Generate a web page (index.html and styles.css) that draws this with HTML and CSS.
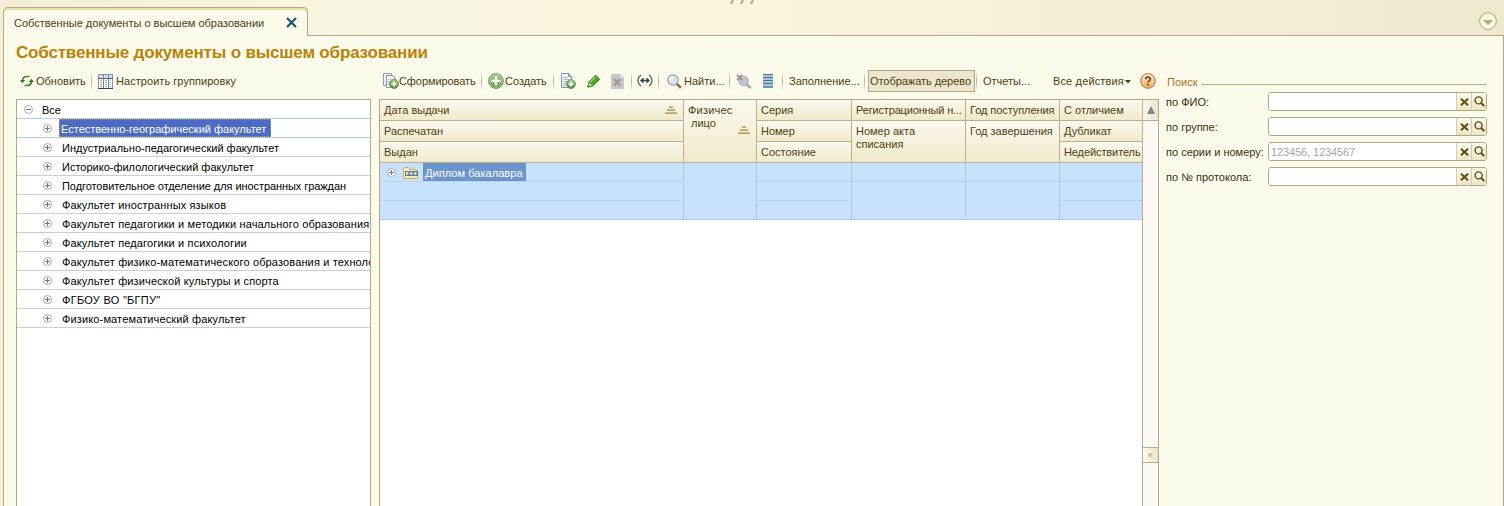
FILE: index.html
```html
<!DOCTYPE html>
<html lang="ru">
<head>
  <meta charset="utf-8">
  <title>Собственные документы о высшем образовании</title>
  <link rel="stylesheet" href="styles.css">
</head>
<body>
  <svg class="defs" width="0" height="0">
    <defs>
      <linearGradient id="green" x1="0" y1="0" x2="0" y2="1">
        <stop offset="0" stop-color="#a5cf8d"/>
        <stop offset="1" stop-color="#4f8f3d"/>
      </linearGradient>
      <linearGradient id="orange" x1="0" y1="0" x2="0" y2="1">
        <stop offset="0" stop-color="#fdebd0"/>
        <stop offset="1" stop-color="#f5a94b"/>
      </linearGradient>
      <symbol id="plus" viewBox="0 0 9 9">
        <circle cx="4.5" cy="4.5" r="4" fill="#fff" stroke="#a9a9a9"/>
        <path d="M2 4.5h5M4.5 2v5" stroke="#777"/>
      </symbol>
      <symbol id="minus" viewBox="0 0 9 9">
        <circle cx="4.5" cy="4.5" r="4" fill="#fff" stroke="#a9a9a9"/>
        <path d="M2 4.5h5" stroke="#777"/>
      </symbol>
      <symbol id="sort" viewBox="0 0 12 8">
        <path d="M4 1h4M2 4h8M0 7h12" stroke="#b3a562" stroke-width="2"/>
        <path d="M4 .5h4M2 3.5h8M0 6.5h12" stroke="#c8bc86"/>
      </symbol>
      <symbol id="add-badge" viewBox="0 0 10 10">
        <circle cx="5" cy="5" r="4.5" fill="url(#green)" stroke="#5c8f4c" stroke-width=".8"/>
        <path d="M2.4 5h5.2M5 2.4v5.2" stroke="#fff" stroke-width="1.7"/>
      </symbol>
      <symbol id="cross" viewBox="0 0 9 8">
        <path d="M1 .8l7 6.4M8 .8L1 7.2" stroke="#5e4c0b" stroke-width="1.9"/>
      </symbol>
      <symbol id="loupe" viewBox="0 0 11 11">
        <circle cx="4.6" cy="4.4" r="3.5" fill="none" stroke="#5e4c0b" stroke-width="1.4"/>
        <path d="M6.9 6.7l3.4 3.4" stroke="#5e4c0b" stroke-width="2"/>
      </symbol>
    </defs>
  </svg>

  <div class="tabbar">
    <div class="tab">
      <span class="tab-title">Собственные документы о высшем образовании</span>
      <svg width="11" height="11" viewBox="0 0 11 11"><path d="M1 1l9 9M10 1l-9 9" stroke="#1f5478" stroke-width="2.2"/></svg>
    </div>
    <div class="tabbar-rest">
      <svg class="grip" width="25" height="4" viewBox="0 0 25 4"><path d="M1 4l2-4M11 4l2-4M21 4l2-4" stroke="#b3ad8c" stroke-width="2.2"/></svg>
      <svg class="tab-menu" width="18" height="18" viewBox="0 0 18 18">
        <circle cx="9" cy="9" r="8.4" fill="#fbf8e2" stroke="#b0a66f"/>
        <path d="M4 8h10l-5 5z" fill="#b5aa67"/>
      </svg>
    </div>
  </div>

  <div class="window">
    <h1>Собственные документы о высшем образовании</h1>

    <div class="columns">
      <div class="groups">
        <div class="toolbar toolbar-left">
          <button class="tool">
            <svg width="14" height="12" viewBox="0 0 14 12">
              <path d="M2.5 5C3 2.5 5 1.500 7 1.500h2.500M11.500 7c-.5 2.500-2.500 3.500-4.500 3.500H4.500" fill="none" stroke="#43832c" stroke-width="1.7"/>
              <path d="M0 5h5.200L2.600 8.200zM8.800 7H14l-2.600-3.200z" fill="#2f7a1c"/>
            </svg>
            <span>Обновить</span>
          </button>
          <i class="sep"></i>
          <button class="tool setup">
            <svg width="15" height="15" viewBox="0 0 15 15">
              <path d="M.5.5h14v14H.5z" fill="#fff" stroke="#8496aa"/>
              <path d="M1 1h13v3H1z" fill="#d3dfec"/>
              <path d="M0 4.500h15" stroke="#48617f"/>
              <path d="M5.500 0v15M10.500 0v15" stroke="#7288a2"/>
              <path d="M2 6.500h2M7 6.500h2M12 6.500h1M2 8.500h2M7 8.500h2M12 8.500h1M2 10.500h2M7 10.500h2M12 10.500h1M2 12.500h2M7 12.500h2M12 12.500h1" stroke="#a3b0bc"/>
              <path d="M0 14.500h15" stroke="#24466d"/>
            </svg>
            <span>Настроить группировку</span>
          </button>
        </div>

        <ul class="tree">
          <li class="root"><svg width="9" height="9"><use href="#minus"/></svg><span>Все</span></li>
          <li class="selected"><svg width="9" height="9"><use href="#plus"/></svg><span>Естественно-географический факультет</span></li>
          <li><svg width="9" height="9"><use href="#plus"/></svg><span>Индустриально-педагогический факультет</span></li>
          <li><svg width="9" height="9"><use href="#plus"/></svg><span>Историко-филологический факультет</span></li>
          <li><svg width="9" height="9"><use href="#plus"/></svg><span class="narrow">Подготовительное отделение для иностранных граждан</span></li>
          <li class="wide"><svg width="9" height="9"><use href="#plus"/></svg><span>Факультет иностранных языков</span></li>
          <li class="wide"><svg width="9" height="9"><use href="#plus"/></svg><span>Факультет педагогики и методики начального образования</span></li>
          <li class="wide"><svg width="9" height="9"><use href="#plus"/></svg><span>Факультет педагогики и психологии</span></li>
          <li class="wide"><svg width="9" height="9"><use href="#plus"/></svg><span>Факультет физико-математического образования и техноло</span></li>
          <li class="wide"><svg width="9" height="9"><use href="#plus"/></svg><span>Факультет физической культуры и спорта</span></li>
          <li class="caps"><svg width="9" height="9"><use href="#plus"/></svg><span>ФГБОУ ВО "БГПУ"</span></li>
          <li class="wide"><svg width="9" height="9"><use href="#plus"/></svg><span>Физико-математический факультет</span></li>
        </ul>
      </div>

      <div class="documents">
        <div class="toolbar toolbar-main">
          <button class="tool">
            <svg width="16" height="16" viewBox="0 0 16 16">
              <path d="M.5.500h8v12h-8z" fill="#eef2f5" stroke="#8fa0ac"/>
              <path d="M3.500 2.500h6l3 3v9h-9z" fill="#f4f7fa" stroke="#8297a8"/>
              <path d="M5 6.500h5M5 8.500h4M5 10.500h2" stroke="#b7c6d2"/>
              <use href="#add-badge" x="6" y="6" width="10" height="10"/>
            </svg>
            <span class="narrow">Сформировать</span>
          </button>
          <i class="sep"></i>
          <button class="tool">
            <svg width="16" height="16" viewBox="0 0 16 16">
              <circle cx="8" cy="8" r="7.400" fill="url(#green)" stroke="#65945a"/>
              <circle cx="8" cy="8" r="6.300" fill="none" stroke="#c0dcb0" stroke-width=".8"/>
              <path d="M3.500 8h9M8 3.500v9" stroke="#fff" stroke-width="2.600"/>
            </svg>
            <span class="create">Создать</span>
          </button>
          <i class="sep"></i>
          <button class="tool">
            <svg width="16" height="16" viewBox="0 0 16 16">
              <path d="M1.500.500h7l3 3v11h-10z" fill="#f4f7fa" stroke="#8297a8"/>
              <path d="M8.500.500v3h3" fill="none" stroke="#8297a8"/>
              <path d="M3 4.500h5M3 6.500h6M3 8.500h4M3 10.500h3M3 12.500h3" stroke="#a9bfd0"/>
              <use href="#add-badge" x="6" y="6" width="10" height="10"/>
            </svg>
          </button>
          <button class="tool pencil">
            <svg width="13" height="13" viewBox="0 0 13 13">
              <path d="M1 12l.8-5L8 .800h1l3.200 3v1L5.500 11z" fill="#49a827" stroke="#267b10"/>
              <path d="M3 7.500l5.500-5.500" stroke="#8fd566" stroke-width="1.500"/>
              <path d="M1.900 7.800l3 2.800L1.200 12z" fill="#e5e3b5"/>
              <path d="M.5 12.600l.5-2.400 1.800 1.600z" fill="#184f0b"/>
            </svg>
          </button>
          <button class="tool">
            <svg width="14" height="15" viewBox="0 0 14 15">
              <path d="M1 0h9l4 4v11H1z" fill="#c6c6ca"/>
              <path d="M10 0v4h4" fill="#dadadd"/>
              <path d="M4 5l6.500 6.500M10.500 5L4 11.500" stroke="#a89494" stroke-width="2.400"/>
            </svg>
          </button>
          <i class="sep"></i>
          <button class="tool">
            <svg width="16" height="14" viewBox="0 0 16 14">
              <path d="M4 1C0 4 0 9 4 12M12 1c4 3 4 8 0 11" fill="none" stroke="#6a6658" stroke-width="1.300"/>
              <path d="M4 6.500h8" stroke="#244867" stroke-width="1.500"/>
              <path d="M3 6.500l3.500-3v6zM13 6.500l-3.500-3v6z" fill="#244867"/>
            </svg>
          </button>
          <i class="sep"></i>
          <button class="tool find">
            <svg width="15" height="15" viewBox="0 0 15 15">
              <path d="M9.500 9.500l4.300 4.300" stroke="#9b6b4c" stroke-width="2.600"/>
              <circle cx="6" cy="6" r="5.200" fill="#d5e6f8" stroke="#9c9da6" stroke-width="1.200"/>
              <path d="M3 6a3 3 0 0 1 3-3" fill="none" stroke="#fff" stroke-width="1.400"/>
            </svg>
            <span>Найти...</span>
          </button>
          <i class="sep"></i>
          <button class="tool">
            <svg width="16" height="15" viewBox="0 0 16 15">
              <path d="M10.500 10l4 4" stroke="#b5a9a6" stroke-width="2.800"/>
              <circle cx="7.500" cy="7" r="4.800" fill="#c1c4cc" stroke="#acadb4"/>
              <path d="M1 1l5 5M6 1L1 6" stroke="#a09090" stroke-width="1.800"/>
            </svg>
          </button>
          <button class="tool">
            <svg width="12" height="15" viewBox="0 0 12 15">
              <path d="M1 0h10v14H1z" fill="#8fb4d3"/>
              <path d="M1 .5h10M1 3.500h10M1 6.500h10M1 9.500h10M1 13h10" stroke="#54799b"/>
              <path d="M1 2h10M1 5h10M1 8h10M1 11h10" stroke="#bcd3e5"/>
            </svg>
          </button>
          <i class="sep"></i>
          <button class="tool">Заполнение...</button>
          <i class="sep"></i>
          <button class="tool pressed">Отображать дерево</button>
          <i class="sep"></i>
          <button class="tool">Отчеты...</button>
          <button class="tool">
            <span class="wide">Все действия</span>
            <svg class="caret" width="6" height="4" viewBox="0 0 6 4"><path d="M0 0h6L3 3.500z" fill="#4b3e12"/></svg>
          </button>
          <button class="tool">
            <svg width="16" height="16" viewBox="0 0 16 16">
              <circle cx="8" cy="8" r="7.300" fill="url(#orange)" stroke="#a8957e" stroke-width="1.300"/>
              <path d="M5.700 6.200C5.700 3.300 10.400 3.400 10.400 6c0 1.700-2.300 1.700-2.300 3.500M8.100 10.800v1.700" fill="none" stroke="#6e3e1b" stroke-width="1.600"/>
            </svg>
          </button>
        </div>

        <div class="table">
          <div class="grid">
            <div class="head c1">Дата выдачи<svg width="12" height="8"><use href="#sort"/></svg></div>
            <div class="head c1 r2">Распечатан</div>
            <div class="head c1 r3">Выдан</div>
            <div class="head c2 tall"><div class="person">Физичес<span>лицо</span></div><svg width="12" height="8"><use href="#sort"/></svg></div>
            <div class="head c3">Серия</div>
            <div class="head c3 r2">Номер</div>
            <div class="head c3 r3">Состояние</div>
            <div class="head c4 regnum">Регистрационный н...</div>
            <div class="head c4 double">Номер акта<br>списания</div>
            <div class="head c5 narrow">Год поступления</div>
            <div class="head c5 double">Год завершения</div>
            <div class="head c6">С отличием</div>
            <div class="head c6 r2">Дубликат</div>
            <div class="head c6 r3 void">Недействитель</div>
          </div>
          <div class="grid record">
            <div class="cell c1 name">
              <svg width="9" height="9"><use href="#plus"/></svg>
              <svg class="folder" width="15" height="12" viewBox="0 0 15 12">
                <path d="M.5 11.500V1.500l1-1h4l1.500 2h6.500l1 1v8z" fill="#f8ebb8" stroke="#c9ab5c"/>
                <path d="M2 4h13v5H2z" fill="#66758a"/>
                <path d="M3 5h2.500v1H4v.5h1.500v.5H4v.5h1.500v.5H3zM7 5.500h2.500v2H7zM11 5.500h2.500v2H11z" fill="#fff"/>
              </svg>
              <span>Диплом бакалавра</span>
            </div>
            <div class="cell c1 r2"></div>
            <div class="cell c1 r3"></div>
            <div class="cell c2 tall"></div>
            <div class="cell c3"></div>
            <div class="cell c3 r2"></div>
            <div class="cell c3 r3"></div>
            <div class="cell c4"></div>
            <div class="cell c4 double"></div>
            <div class="cell c5"></div>
            <div class="cell c5 double"></div>
            <div class="cell c6"></div>
            <div class="cell c6 r2"></div>
            <div class="cell c6 r3"></div>
          </div>
          <div class="scrollbar">
            <div class="scroll-up"><svg width="8" height="8" viewBox="0 0 8 8"><path d="M4 0l4 8H0z" fill="#85847f"/></svg></div>
            <div class="scroll-track"></div>
            <div class="scroll-thumb"><i></i></div>
          </div>
        </div>
      </div>

      <form class="search">
        <div class="legend">Поиск</div>
        <div class="field">
          <label>по ФИО:</label>
          <div class="box"><input type="text"><b><svg width="9" height="8"><use href="#cross"/></svg></b><b><svg width="11" height="11"><use href="#loupe"/></svg></b></div>
        </div>
        <div class="field">
          <label>по группе:</label>
          <div class="box"><input type="text"><b><svg width="9" height="8"><use href="#cross"/></svg></b><b><svg width="11" height="11"><use href="#loupe"/></svg></b></div>
        </div>
        <div class="field">
          <label>по серии и номеру:</label>
          <div class="box"><input type="text" placeholder="123456, 1234567"><b><svg width="9" height="8"><use href="#cross"/></svg></b><b><svg width="11" height="11"><use href="#loupe"/></svg></b></div>
        </div>
        <div class="field">
          <label>по № протокола:</label>
          <div class="box"><input type="text"><b><svg width="9" height="8"><use href="#cross"/></svg></b><b><svg width="11" height="11"><use href="#loupe"/></svg></b></div>
        </div>
      </form>
    </div>
  </div>
</body>
</html>
```

FILE: styles.css
```css
* {
  box-sizing: border-box;
}

body {
  margin: 0;
  height: 506px;
  overflow: hidden;
  display: flex;
  flex-direction: column;
  font-family: "Liberation Sans", Arial, sans-serif;
  font-size: 11px;
  color: #4d3f10;
  background: linear-gradient(90deg, #f4eed9 0, #f8f5e0 300px, #f8f4de 750px, #f1ead3 1400px, #efe7d0 100%);
}

.defs {
  position: absolute;
}

svg {
  display: block;
  flex: none;
}

.wide {
  letter-spacing: 0.14px;
}

.narrow {
  letter-spacing: -0.07px;
}

/* tabs */
.tabbar {
  display: flex;
  height: 36px;
  padding-left: 3px;
}

.tab {
  display: flex;
  justify-content: space-between;
  align-items: center;
  width: 305px;
  margin-top: 7px;
  padding: 0 10px 0 10px;
  border: 1px solid #b0a882;
  border-bottom: none;
  border-radius: 5px 5px 0 0;
  background: #fcfaeb;
  box-shadow: inset 0 2px #f5dea4;
  white-space: nowrap;
}

.tab-title {
  padding-top: 1px;
}

.tabbar-rest {
  flex: 1;
  display: flex;
  justify-content: space-between;
  border-bottom: 1px solid #b0a882;
}

.grip {
  margin-left: 422px;
}

.tab-menu {
  margin: 12px 7px 0 0;
}

/* window */
.window {
  flex: 1;
  min-height: 0;
  display: flex;
  flex-direction: column;
  margin-left: 3px;
  padding-left: 12px;
  border-left: 1px solid #b0a882;
  border-right: 1px solid #b0a882;
  background: #fcfaeb;
}

h1 {
  margin: 0;
  height: 34px;
  line-height: 33px;
  font-size: 17px;
  letter-spacing: -0.17px;
  color: #b98306;
  white-space: nowrap;
}

.columns {
  flex: 1;
  min-height: 0;
  display: grid;
  grid-template-columns: 355px 780px 320px;
  gap: 8px;
}

.groups,
.documents {
  display: flex;
  flex-direction: column;
  min-height: 0;
}

/* toolbars */
.toolbar {
  display: grid;
  flex: none;
  height: 29px;
  padding-bottom: 7px;
  align-items: center;
}

.toolbar-left {
  grid-template-columns: 71px 7px auto;
  padding-left: 4px;
}

.toolbar-left .tool {
  gap: 2px;
}

.toolbar-left .setup {
  gap: 3px;
  letter-spacing: 0.05px;
}

.toolbar-main {
  grid-template-columns: 98px 7px 65px 7px 26px 24px 21px 6px 21px 9px 62px 7px 26px 20px 7px 75px 4px 108px 7px 70px 87px 16px;
  padding-left: 4px;
}

.tool {
  display: flex;
  align-items: center;
  height: 22px;
  padding: 0;
  border: none;
  background: none;
  font: inherit;
  color: inherit;
  white-space: nowrap;
}

.tool.find {
  gap: 2px;
}

.tool.pressed {
  width: 107px;
  padding-left: 1px;
  border: 1px solid #b0a882;
  background: #ebe6cd;
  letter-spacing: -0.05px;
}

.tool.pencil {
  padding-left: 1px;
}

.create {
  margin-left: 1px;
}

.caret {
  margin: 2px 0 0 1px;
}

.sep {
  width: 1px;
  height: 20px;
  background: linear-gradient(#fcfaeb, #b8b18e 50%, #fcfaeb);
}

/* faculties */
.tree {
  flex: 1;
  margin: 0;
  padding: 0;
  overflow: hidden;
  list-style: none;
  border: 1px solid #b0a882;
  border-bottom: none;
  background: #fff;
  color: #000;
}

.tree li {
  display: flex;
  align-items: center;
  gap: 7px;
  height: 19px;
  padding-left: 26px;
  border-bottom: 1px solid #c9d0d3;
  white-space: nowrap;
}

.tree .root {
  gap: 6px;
  padding-left: 7px;
  border-color: #aacbea;
}

.tree .caps {
  letter-spacing: 0.28px;
}

.tree span {
  padding: 2px 0 0 3px;
}

.tree .selected {
  border-color: #aacbea;
}

.tree .selected span {
  width: 212px;
  height: 18px;
  padding: 0 0 0 1px;
  line-height: 18px;
  border: 1px dotted #b59d3d;
  background: #4d6bc4;
  color: #fff;
}

/* documents table */
.table {
  position: relative;
  flex: 1;
  border: 1px solid #b0a882;
  border-bottom: none;
  background: #fff;
}

.grid {
  display: grid;
  grid-template-columns: 304px 73px 95px 114px 94px 83px;
  grid-template-rows: repeat(3, 21px);
}

.grid.record {
  grid-template-rows: repeat(3, 19px);
}

.c1 { grid-column: 1; }
.c2 { grid-column: 2; }
.c3 { grid-column: 3; }
.c4 { grid-column: 4; }
.c5 { grid-column: 5; }
.c6 { grid-column: 6; }

.grid > div { grid-row: 1; }
.grid > .r2 { grid-row: 2; }
.grid > .r3 { grid-row: 3; }
.grid > .tall { grid-row: 1 / 4; }
.grid > .double { grid-row: 2 / 4; }

.head {
  display: flex;
  justify-content: space-between;
  padding: 4px 4px 0;
  line-height: 13px;
  border-right: 1px solid #b9b18c;
  border-bottom: 1px solid #b9b18c;
  background: linear-gradient(#fbf9ef, #f0e9cb);
  white-space: nowrap;
}

.head svg {
  margin: 2px 2px 0 0;
}

.head.tall svg {
  margin: 22px 2px 0 -12px;
}

.person {
  letter-spacing: 0.2px;
}

.person span {
  display: block;
  padding-left: 3px;
  letter-spacing: 0;
}

.regnum {
  padding-right: 0;
  letter-spacing: -0.16px;
}

.void {
  padding-right: 0;
  letter-spacing: -0.1px;
}

.cell {
  border-right: 1px solid #afc8e6;
  border-bottom: 1px solid #b9d4f2;
  background: #c8e1ff;
}

.cell.r3,
.cell.tall,
.cell.double {
  border-bottom-color: #a9c8e8;
}

.name {
  display: flex;
  align-items: flex-start;
  padding: 5px 0 0 7px;
}

.name .folder {
  margin: -1px 5px 0 7px;
}

.name span {
  height: 18px;
  margin-top: -5px;
  padding: 0 3px 0 2px;
  line-height: 20px;
  letter-spacing: 0.05px;
  background: #6b95cf;
  color: #fff;
}

.scrollbar {
  position: absolute;
  top: 0;
  right: 0;
  bottom: 0;
  width: 16px;
  display: flex;
  flex-direction: column;
  border-left: 1px solid #b9b18c;
  background: #faf9f4;
}

.scroll-up,
.scroll-thumb {
  display: flex;
  justify-content: center;
  align-items: center;
  height: 21px;
  border-bottom: 1px solid #b9b18c;
  background: linear-gradient(90deg, #fbf9ef, #ebe5c8);
}

.scroll-track {
  height: 326px;
}

.scroll-thumb {
  height: 16px;
  border-top: 1px solid #b9b18c;
}

.scroll-thumb i {
  width: 5px;
  height: 5px;
  border-radius: 50%;
  background: linear-gradient(135deg, #aaa58b, #f7f3df);
}

/* search form */
.search {
  color: #3a300e;
}

.legend {
  display: flex;
  align-items: center;
  gap: 4px;
  height: 22px;
  padding-top: 2px;
  color: #a3761a;
}

.legend::after {
  content: "";
  flex: 1;
  height: 1px;
  margin-top: 5px;
  background: #b5ad85;
}

.field {
  display: flex;
  justify-content: space-between;
  align-items: center;
  height: 19px;
  margin-bottom: 6px;
  white-space: nowrap;
}

.field label {
  margin-left: -1px;
}

.box {
  display: flex;
  width: 219px;
  height: 19px;
  overflow: hidden;
  border: 1px solid #b0a882;
  border-radius: 3px;
  background: #fff;
}

.box input {
  flex: 1;
  min-width: 0;
  padding: 0 2px;
  border: none;
  outline: none;
  font: inherit;
  letter-spacing: -0.1px;
}

.box input::placeholder {
  color: #a5a5a5;
}

.box b {
  display: flex;
  justify-content: center;
  align-items: center;
  width: 15px;
  border-left: 1px solid #d3ccae;
  background: linear-gradient(#fbf9ef, #ece6c9);
}
```
